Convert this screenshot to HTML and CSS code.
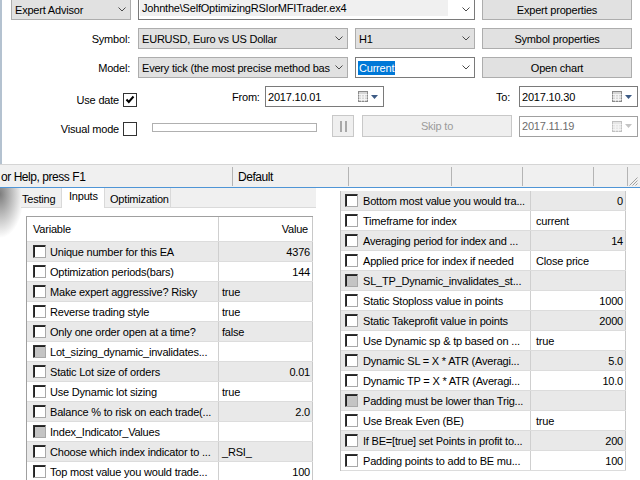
FILE: index.html
```html
<!DOCTYPE html>
<html lang="en">
  <head>
    <meta charset="UTF-8" />
    <meta name="viewport" content="width=device-width, initial-scale=1.0" />
    <title>Strategy Tester - Inputs</title>
    <link rel="stylesheet" href="styles.css">
  </head>
  <body>
    <div class="tester">
      <div class="row row-first">
        <div class="combo ea-type">
          <span class="combo-text">Expert Advisor</span>
          <svg class="chev" width="8" height="5" viewBox="0 0 8 5"><polyline points="0.5,0.5 4,4 7.5,0.5" /></svg>
        </div>
        <div class="combo edit ea-path">
          <span class="combo-text">Johnthe\SelfOptimizingRSIorMFITrader.ex4</span>
          <svg class="chev" width="8" height="5" viewBox="0 0 8 5"><polyline points="0.5,0.5 4,4 7.5,0.5" /></svg>
        </div>
        <button class="btn">Expert properties</button>
      </div>

      <div class="row">
        <span class="label">Symbol:</span>
        <div class="combo wide">
          <span class="combo-text">EURUSD, Euro vs US Dollar</span>
          <svg class="chev" width="8" height="5" viewBox="0 0 8 5"><polyline points="0.5,0.5 4,4 7.5,0.5" /></svg>
        </div>
        <div class="combo narrow">
          <span class="combo-text">H1</span>
          <svg class="chev" width="8" height="5" viewBox="0 0 8 5"><polyline points="0.5,0.5 4,4 7.5,0.5" /></svg>
        </div>
        <button class="btn">Symbol properties</button>
      </div>

      <div class="row">
        <span class="label">Model:</span>
        <div class="combo wide">
          <span class="combo-text">Every tick (the most precise method bas</span>
          <svg class="chev" width="8" height="5" viewBox="0 0 8 5"><polyline points="0.5,0.5 4,4 7.5,0.5" /></svg>
        </div>
        <div class="combo edit narrow">
          <span class="combo-text"><span class="selected">Current</span></span>
          <svg class="chev" width="8" height="5" viewBox="0 0 8 5"><polyline points="0.5,0.5 4,4 7.5,0.5" /></svg>
        </div>
        <button class="btn">Open chart</button>
      </div>

      <div class="row">
        <span class="label short">Use date</span>
        <span class="check">
          <svg width="12" height="12" viewBox="0 0 12 12"><polyline points="2.5,5.5 4.8,8 9.5,2.5" /></svg>
        </span>
        <span class="date-label from">From:</span>
        <div class="date">
          <span class="date-text">2017.10.01</span>
          <svg class="cal" width="10" height="11" viewBox="0 0 10 11">
            <rect x="0.5" y="0.5" width="9" height="10" />
            <path d="M0.5 3.5 H9.5 M0.5 6 H9.5 M0.5 8.5 H9.5 M3.5 3.5 V10.5 M6.5 3.5 V10.5" />
          </svg>
          <svg class="drop" width="7" height="4" viewBox="0 0 7 4"><polygon points="0,0 7,0 3.5,4" /></svg>
        </div>
        <span class="date-label to">To:</span>
        <div class="date">
          <span class="date-text">2017.10.30</span>
          <svg class="cal" width="10" height="11" viewBox="0 0 10 11">
            <rect x="0.5" y="0.5" width="9" height="10" />
            <path d="M0.5 3.5 H9.5 M0.5 6 H9.5 M0.5 8.5 H9.5 M3.5 3.5 V10.5 M6.5 3.5 V10.5" />
          </svg>
          <svg class="drop" width="7" height="4" viewBox="0 0 7 4"><polygon points="0,0 7,0 3.5,4" /></svg>
        </div>
      </div>

      <div class="row row-last">
        <span class="label short">Visual mode</span>
        <span class="check"></span>
        <div class="slider"></div>
        <button class="btn pause" disabled>
          <svg width="7" height="11" viewBox="0 0 7 11"><rect x="0" y="0" width="2" height="11" /><rect x="5" y="0" width="2" height="11" /></svg>
        </button>
        <button class="btn skip" disabled>Skip to</button>
        <div class="date disabled">
          <span class="date-text">2017.11.19</span>
          <svg class="cal" width="10" height="11" viewBox="0 0 10 11">
            <rect x="0.5" y="0.5" width="9" height="10" />
            <path d="M0.5 3.5 H9.5 M0.5 6 H9.5 M0.5 8.5 H9.5 M3.5 3.5 V10.5 M6.5 3.5 V10.5" />
          </svg>
          <svg class="drop" width="7" height="4" viewBox="0 0 7 4"><polygon points="0,0 7,0 3.5,4" /></svg>
        </div>
      </div>
    </div>

    <div class="statusbar">
      <span class="cell c1">or Help, press F1</span>
      <span class="cell c2">Default</span>
      <span class="cell c3"></span>
      <span class="cell c4"></span>
      <span class="cell c5"></span>
      <span class="cell c6"></span>
      <span class="grip">
        <svg width="10" height="10" viewBox="0 0 10 10"><path d="M9.5 1.5 L1.5 9.5 M9.5 4.5 L4.5 9.5 M9.5 7.5 L7.5 9.5" /></svg>
      </span>
    </div>

    <div class="panels">
      <div class="panel-left">
        <div class="tabs">
          <span class="tab first">Testing</span>
          <span class="tab active">Inputs</span>
          <span class="tab last">Optimization</span>
        </div>

        <div class="grid">
          <div class="grid-row head"><span class="var">Variable</span><span class="val num">Value</span></div>
          <div class="grid-row"><span class="var"><i class="box"></i>Unique number for this EA</span><span class="val num">4376</span></div>
          <div class="grid-row"><span class="var"><i class="box"></i>Optimization periods(bars)</span><span class="val num">144</span></div>
          <div class="grid-row"><span class="var"><i class="box"></i>Make expert aggressive? Risky</span><span class="val">true</span></div>
          <div class="grid-row"><span class="var"><i class="box"></i>Reverse trading style</span><span class="val">true</span></div>
          <div class="grid-row"><span class="var"><i class="box"></i>Only one order open at a time?</span><span class="val">false</span></div>
          <div class="grid-row"><span class="var"><i class="box group"></i>Lot_sizing_dynamic_invalidates...</span><span class="val"></span></div>
          <div class="grid-row"><span class="var"><i class="box"></i>Static Lot size of orders</span><span class="val num">0.01</span></div>
          <div class="grid-row"><span class="var"><i class="box"></i>Use Dynamic lot sizing</span><span class="val">true</span></div>
          <div class="grid-row"><span class="var"><i class="box"></i>Balance % to risk on each trade(...</span><span class="val num">2.0</span></div>
          <div class="grid-row"><span class="var"><i class="box group"></i>Index_Indicator_Values</span><span class="val"></span></div>
          <div class="grid-row"><span class="var"><i class="box"></i>Choose which index indicator to ...</span><span class="val">_RSI_</span></div>
          <div class="grid-row"><span class="var"><i class="box"></i>Top most value you would trade...</span><span class="val num">100</span></div>
        </div>
      </div>

      <div class="panel-right">
        <div class="grid grid-right">
          <div class="grid-row"><span class="var"><i class="box"></i>Bottom most value you would tra...</span><span class="val num">0</span></div>
          <div class="grid-row"><span class="var"><i class="box"></i>Timeframe for index</span><span class="val">current</span></div>
          <div class="grid-row"><span class="var"><i class="box"></i>Averaging period for index and ...</span><span class="val num">14</span></div>
          <div class="grid-row"><span class="var"><i class="box"></i>Applied price for index if needed</span><span class="val">Close price</span></div>
          <div class="grid-row"><span class="var"><i class="box group"></i>SL_TP_Dynamic_invalidates_st...</span><span class="val"></span></div>
          <div class="grid-row"><span class="var"><i class="box"></i>Static Stoploss value in points</span><span class="val num">1000</span></div>
          <div class="grid-row"><span class="var"><i class="box"></i>Static Takeprofit value in points</span><span class="val num">2000</span></div>
          <div class="grid-row"><span class="var"><i class="box"></i>Use Dynamic sp &amp; tp based on ...</span><span class="val">true</span></div>
          <div class="grid-row"><span class="var"><i class="box"></i>Dynamic SL = X * ATR (Averagi...</span><span class="val num">5.0</span></div>
          <div class="grid-row"><span class="var"><i class="box"></i>Dynamic TP = X * ATR (Averagi...</span><span class="val num">10.0</span></div>
          <div class="grid-row"><span class="var"><i class="box group"></i>Padding must be lower than Trig...</span><span class="val"></span></div>
          <div class="grid-row"><span class="var"><i class="box"></i>Use Break Even (BE)</span><span class="val">true</span></div>
          <div class="grid-row"><span class="var"><i class="box"></i>If BE=[true] set Points in profit to...</span><span class="val num">200</span></div>
          <div class="grid-row"><span class="var"><i class="box"></i>Padding points to add to BE mu...</span><span class="val num">100</span></div>
        </div>
      </div>
    </div>
  </body>
</html>
```

FILE: styles.css
```css
* {
  box-sizing: border-box;
}

html,
body {
  margin: 0;
  padding: 0;
}

body {
  width: 640px;
  height: 480px;
  overflow: hidden;
  background-color: #fff;
  font-family: "Liberation Sans", Arial, sans-serif;
  font-size: 11px;
  letter-spacing: -0.2px;
  color: #000;
}

button {
  font: inherit;
  letter-spacing: inherit;
  color: inherit;
  margin: 0;
  padding: 0;
}

/* tester settings */

.tester {
  height: 164px;
  border-left: 2px solid #b4c2d0;
  display: flex;
  flex-direction: column;
  gap: 8px;
}

.row {
  display: flex;
  align-items: center;
  height: 21px;
  flex: none;
}

.row-first {
  margin-top: -1px;
}

.row-last {
  height: 22px;
}

.label {
  width: 128px;
  flex: none;
  text-align: right;
  white-space: nowrap;
}

.label.short {
  width: 117px;
  padding-top: 6px;
}

.combo {
  display: flex;
  align-items: center;
  height: 21px;
  flex: none;
  background-color: #e1e1e1;
  border: 1px solid #adadad;
}

.combo-text {
  flex: 1;
  overflow: hidden;
  white-space: nowrap;
  padding-left: 3px;
}

.chev {
  flex: none;
  margin: 0 4px 0 6px;
  fill: none;
  stroke: #4a4a4a;
  stroke-width: 1;
}

.combo.edit {
  background-color: #fff;
  border-color: #7a7a7a;
}

.ea-type {
  margin-left: 9px;
  width: 120px;
}

.ea-path {
  margin-left: 7px;
  width: 337px;
  padding: 0 0 3px 1px;
  align-items: stretch;
}

.ea-path .combo-text {
  background-color: #f0f0f0;
  padding-left: 2px;
  line-height: 17px;
  margin-right: 8px;
}

.ea-path .chev {
  align-self: center;
  margin-top: 2px;
}

.wide {
  margin-left: 8px;
  width: 210px;
}

.wide .chev {
  margin-left: 1px;
}

.narrow {
  margin-left: 7px;
  width: 120px;
}

.combo.edit.narrow .combo-text {
  padding-left: 2px;
}

.selected {
  display: inline-block;
  background-color: #0078d7;
  color: #fff;
  padding: 0 1px;
  line-height: 14px;
}

.btn {
  flex: none;
  margin-left: 7px;
  width: 150px;
  height: 21px;
  background-color: #e1e1e1;
  border: 1px solid #adadad;
  text-align: center;
}

.check {
  flex: none;
  display: flex;
  align-items: center;
  justify-content: center;
  width: 14px;
  height: 14px;
  margin: 6px 0 0 4px;
  border: 1px solid #333;
  background-color: #fff;
}

.check svg {
  fill: none;
  stroke: #000;
  stroke-width: 2;
}

.date-label {
  flex: none;
  white-space: nowrap;
}

.date-label.from {
  margin-left: 95px;
  width: 33px;
}

.date-label.to {
  margin-left: 112px;
  width: 23px;
}

.date {
  flex: none;
  display: flex;
  align-items: center;
  width: 119px;
  height: 21px;
  border: 1px solid #7a7a7a;
  background-color: #fff;
}

.date-text {
  flex: 1;
  padding-left: 2px;
}

.cal {
  flex: none;
  margin-right: 3px;
}

.cal rect {
  fill: #d6d6d6;
  stroke: #8a8a8a;
}

.cal path {
  fill: none;
  stroke: #f4f4f4;
}

.drop {
  flex: none;
  margin-right: 5px;
  fill: #3d5b85;
}

.date.disabled {
  margin-left: 7px;
  border-color: #a0a0a0;
  color: #6d6d6d;
}

.date.disabled .cal rect {
  fill: #e6e6e6;
  stroke: #c0c0c0;
}

.date.disabled .drop {
  fill: #c4c4c4;
}

.slider {
  flex: none;
  margin: 3px 0 0 15px;
  width: 165px;
  height: 9px;
  border: 1px solid #b0b0b0;
  background-color: #fff;
}

.btn.pause {
  margin-left: 15px;
  width: 22px;
  height: 22px;
  display: flex;
  align-items: center;
  justify-content: center;
  background-color: #efefef;
  border-color: #c8c8c8;
  fill: #a8a8a8;
}

.btn.skip {
  margin-left: 8px;
  height: 22px;
  background-color: #efefef;
  border-color: #c8c8c8;
  color: #9b9b9b;
}

/* status bar */

.statusbar {
  display: flex;
  height: 24px;
  padding: 2px 0 1px;
  background-color: #f0f0f0;
  border-top: 1px solid #d5d5d5;
  border-bottom: 1px solid #4f95d6;
  font-size: 12px;
  letter-spacing: -0.45px;
}

.cell {
  flex: none;
  display: flex;
  align-items: center;
  white-space: nowrap;
  overflow: hidden;
  border-right: 1px solid #b4b4b4;
}

.c1 {
  width: 233px;
  padding-left: 1px;
}

.c2 {
  width: 116px;
  padding-left: 5px;
}

.c3 {
  width: 103px;
}

.c4,
.c5 {
  width: 71px;
}

.c6 {
  width: 34px;
}

.grip {
  flex: 1;
  display: flex;
  align-items: flex-end;
  justify-content: flex-end;
  padding-right: 2px;
}

.grip svg {
  fill: none;
  stroke: #a0a0a0;
}

/* input panels */

.panels {
  display: flex;
  height: 292px;
}

.panel-left {
  width: 340px;
  flex: none;
  padding-left: 21px;
  background: radial-gradient(ellipse 24px 44px at 0 6px, rgba(70, 70, 70, 0.7), rgba(70, 70, 70, 0)) no-repeat;
}

.tabs {
  display: flex;
  width: 295px;
  height: 20px;
  background-color: #f0f0f0;
  border-bottom: 1px solid #dadada;
}

.tab {
  display: flex;
  align-items: center;
  padding-top: 2px;
  white-space: nowrap;
  border-right: 1px solid #d9d9d9;
}

.tab.first {
  width: 41px;
  padding-left: 1px;
}

.tab.active {
  width: 44px;
  padding: 0 0 4px 7px;
  margin-bottom: -1px;
  background-color: #fff;
  border-left: 1px solid #d9d9d9;
  margin-left: -1px;
}

.tab.last {
  width: 66px;
  padding-left: 5px;
}

.grid {
  margin: 8px 0 0 5px;
  width: 287px;
  border-top: 1px solid #a0a0a0;
  border-left: 1px solid #a0a0a0;
}

.grid-row {
  display: flex;
  height: 20px;
  border-bottom: 1px solid #dcdcdc;
}

.grid-row.head {
  height: 25px;
}

.grid .grid-row:nth-child(even) {
  background-color: #e9e9e9;
}

.var {
  flex: none;
  display: flex;
  align-items: center;
  width: 192px;
  padding-left: 6px;
  overflow: hidden;
  white-space: nowrap;
  border-right: 1px solid #cfcfcf;
}

.val {
  flex: none;
  display: flex;
  align-items: center;
  width: 94px;
  padding-left: 3px;
  white-space: nowrap;
  border-right: 1px solid #c8c8c8;
}

.val.num {
  justify-content: flex-end;
  padding-right: 2px;
}

.head .val.num {
  padding-right: 4px;
}

.box {
  flex: none;
  width: 13px;
  height: 13px;
  margin-right: 4px;
  background-color: #fff;
  border: 1px solid;
  border-color: #333 #a8a8a8 #a8a8a8 #333;
  box-shadow: inset 1px 1px 0 #222;
}

.box.group {
  background-color: #c4c4c4;
}

.panel-right {
  flex: 1;
}

.grid.grid-right {
  margin: 3px 0 0 0;
  width: 286px;
  border-top: none;
  border-left: 1px solid #c0c0c0;
}

.grid.grid-right .grid-row:nth-child(even) {
  background-color: transparent;
}

.grid.grid-right .grid-row:nth-child(odd) {
  background-color: #e9e9e9;
}

.grid-right .var {
  width: 190px;
  padding-left: 4px;
}

.grid-right .box {
  margin-right: 5px;
}

.grid-right .val {
  width: 95px;
  padding-left: 5px;
}
```
